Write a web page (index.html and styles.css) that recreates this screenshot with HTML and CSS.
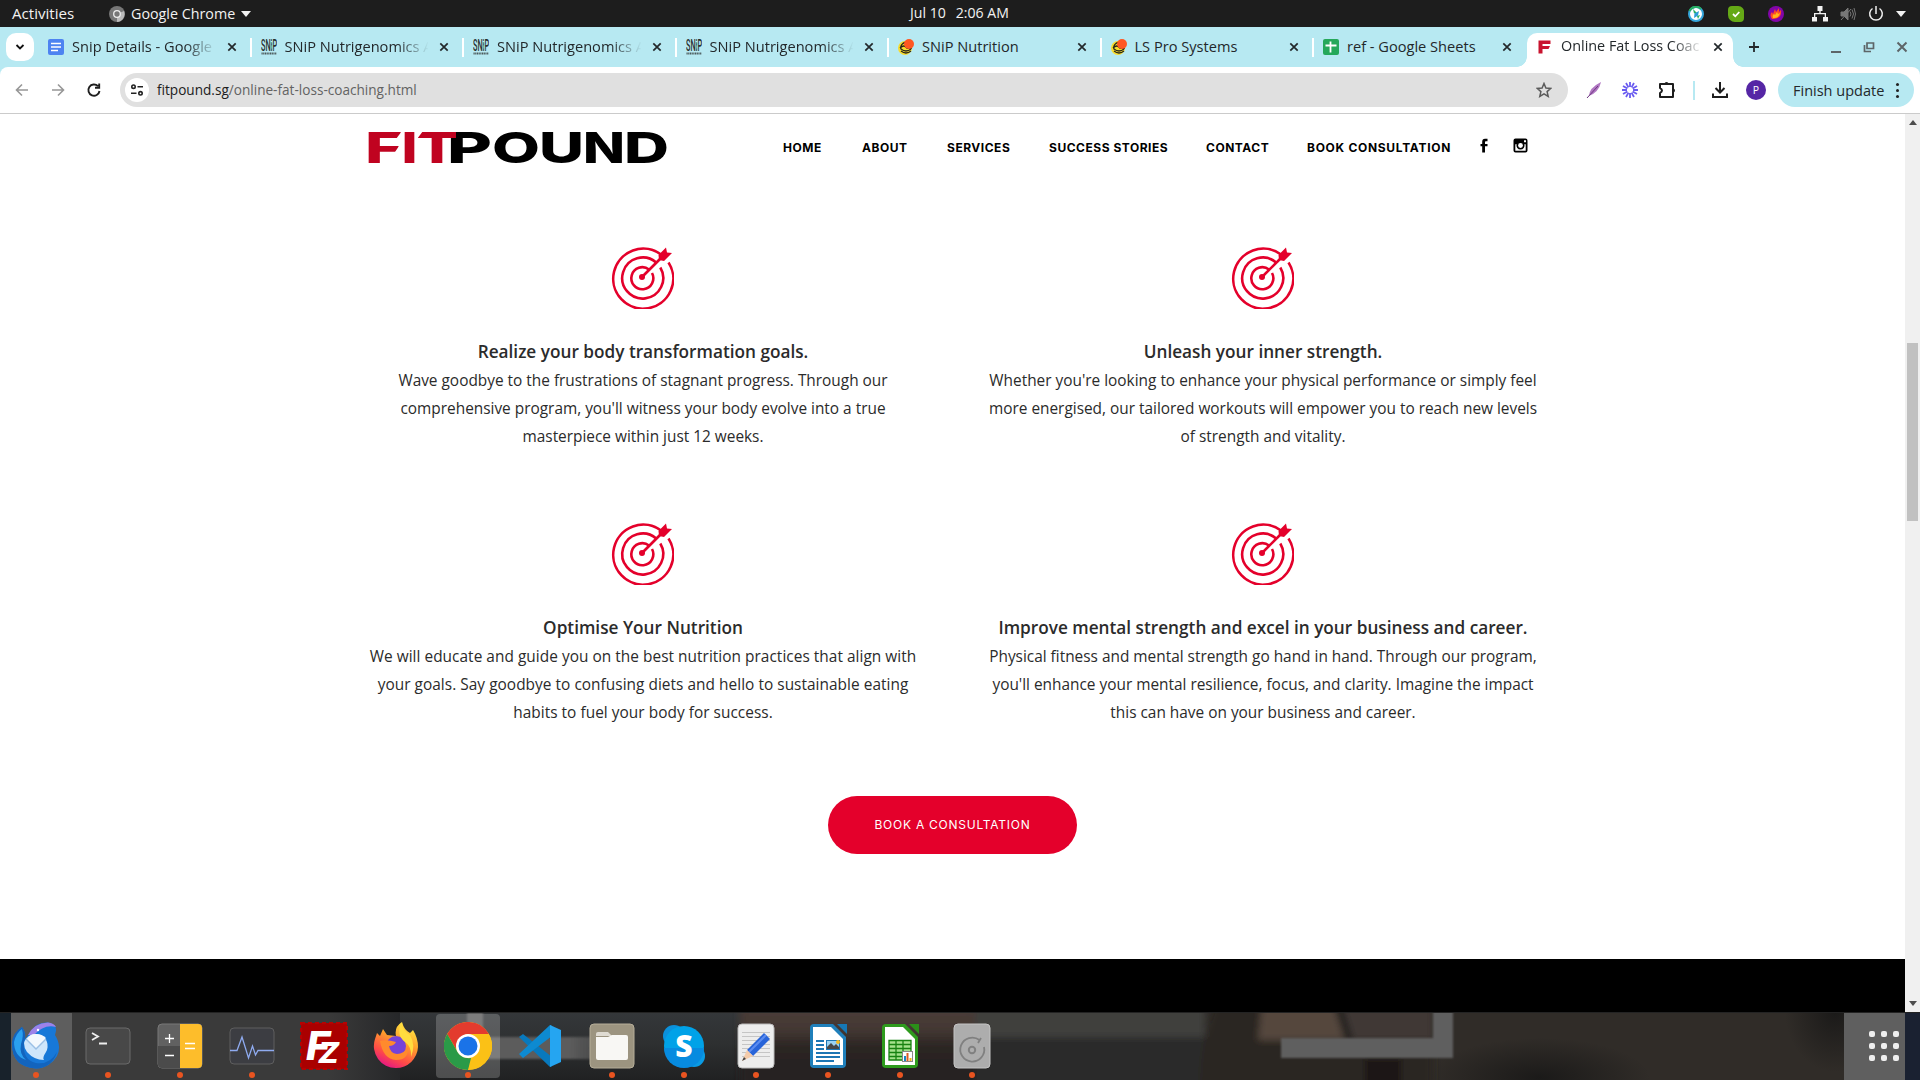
FILE: index.html
```html
<!DOCTYPE html>
<html lang="en">
<head>
<meta charset="utf-8">
<title>Online Fat Loss Coaching</title>
<link rel="stylesheet" href="styles.css">
</head>
<body>
<svg class="defs" width="0" height="0">
  <defs>
    <symbol id="target" viewBox="0 0 64 64">
      <g fill="none" stroke="#e4002b" stroke-width="2.6">
        <path d="M51 9.500A30 30 0 1 0 58.500 17.500"/>
        <path d="M46.200 17.600A20.500 20.500 0 1 0 50.300 22.500"/>
        <path d="M39 24.500A11 11 0 1 0 42 28"/>
        <path d="M32 32L53 11"/>
      </g>
      <circle cx="32" cy="32" r="3" fill="#e4002b"/>
      <path d="M49 15L48.500 10L56 2.500L57 7.500L62 8L54 16Z" fill="#e4002b"/>
    </symbol>
    <symbol id="close" viewBox="0 0 10 10"><path d="M1.300 1.300L8.700 8.700M8.700 1.300L1.300 8.700" stroke="#23282b" stroke-width="1.700"/></symbol>
    <symbol id="snip" viewBox="0 0 16 16">
      <text x="0" y="11.500" font-family="Roboto,sans-serif" font-size="16" font-weight="500" fill="#27302f" textLength="16" lengthAdjust="spacingAndGlyphs">SNiP</text>
      <path d="M9.600 3L12 5L10 8L12 11" stroke="#6ccbb2" fill="none" stroke-width=".8"/>
      <path d="M.5 14.500H15.500" stroke="#4b595b" stroke-width="2" stroke-dasharray="1.200 .5"/>
    </symbol>
    <symbol id="nutri" viewBox="0 0 16 16">
      <circle cx="7" cy="9" r="7" fill="#f7dc2d"/>
      <path d="M8 3C4 4 2 7 3 10Q8 14 13 10M2 9Q6 5 9 9H14M3 12Q8 16 13 12" fill="none" stroke="#26251c" stroke-width="1.300"/>
      <circle cx="11" cy="5" r="5" fill="#ff5722"/>
    </symbol>
  </defs>
</svg>

<header class="topbar">
  <span class="activities">Activities</span>
  <span class="app">
    <svg width="16" height="16" viewBox="0 0 16 16"><circle cx="8" cy="8" r="8" fill="#777"/><path d="M8 8L15 5A8 8 0 0 1 8 16Z" fill="#bbb"/><circle cx="8" cy="8" r="3.300" fill="#777" stroke="#eee" stroke-width="1.300"/></svg>
    <span class="app-name">Google Chrome</span>
    <svg width="10" height="6" viewBox="0 0 10 6"><path d="M0 0H10L5 6Z" fill="#f2f2f2"/></svg>
  </span>
  <span class="clock"><span>Jul 10</span><span>2:06 AM</span></span>
  <span class="tray">
    <svg width="16" height="16" viewBox="0 0 16 16"><circle cx="8" cy="8" r="7" fill="#fff" stroke="#35a6dc" stroke-width="2"/><path d="M1.500 5A7 7 0 0 1 13 3" fill="none" stroke="#27ae60" stroke-width="2"/><path d="M5 3L9 7L6 7.500Z" fill="#27ae60"/><path d="M6.500 7.500L11 5L10 9.500L6 12Z" fill="#2b9bd8"/><path d="M9 10L12 9L10 13Z" fill="#27ae60"/></svg>
    <svg width="16" height="16" viewBox="0 0 16 16"><path d="M4 0H10A6 6 0 0 1 16 7V12Q16 16 12 16H7A7 7 0 0 1 0 9V4Q0 0 4 0" fill="#65a916"/><path d="M5 8L7.300 10.300L11.300 6" fill="none" stroke="#fff" stroke-width="1.800"/></svg>
    <svg width="16" height="16" viewBox="0 0 16 16"><circle cx="8" cy="8" r="8" fill="#8205a8"/><path d="M4 13Q1 9 4 6L5 8L7 3L8 6L11 2V6L13 4Q14 12 6 13Z" fill="#ff4b26"/><path d="M5 12Q4 9 6 8L7 9L9 6L10 8L12 7Q11 12 6 12Z" fill="#ffb719"/></svg>
    <svg class="net" width="16" height="16" viewBox="0 0 16 16" fill="#f2f2f2"><path d="M5.500 0H10.500V5H8.700V7H14V11H16V15.500H11V11H12.700V8.300H3.300V11H5V15.500H0V11H2V7H7.300V5H5.500Z"/></svg>
    <svg width="16" height="16" viewBox="0 0 16 16" fill="none" stroke="#777"><path d="M1 6H4L8 2V14L4 10H1Z" fill="#777"/><path d="M10 5.500Q12 8 10 10.500M12 3.500Q15 8 12 12.500M14 2Q17 8 14 14M1 14L11 3"/></svg>
    <svg width="16" height="16" viewBox="0 0 16 16" fill="none" stroke="#eee" stroke-width="1.500"><path d="M8 0V8M4.500 2.500A6.300 6.300 0 1 0 11.500 2.500"/></svg>
    <svg width="10" height="6" viewBox="0 0 10 6"><path d="M0 0H10L5 6Z" fill="#f2f2f2"/></svg>
  </span>
</header>

<div class="tabstrip">
  <button class="tab-search"><svg width="10" height="8" viewBox="0 0 10 8"><path d="M1.500 2L5 5.500L8.500 2" fill="none" stroke="#111" stroke-width="1.800"/></svg></button>
  <div class="tab"><svg class="fav" viewBox="0 0 16 16"><rect width="16" height="16" rx="2" fill="#4d83f1"/><path d="M3 4.500H13M3 8H13M3 11.500H10" stroke="#fff" stroke-width="1.700"/></svg><span class="tab-title fade">Snip Details - Google</span><svg class="x"><use href="#close"/></svg></div>
  <div class="tab"><svg class="fav"><use href="#snip"/></svg><span class="tab-title fade">SNiP Nutrigenomics A</span><svg class="x"><use href="#close"/></svg></div>
  <div class="tab"><svg class="fav"><use href="#snip"/></svg><span class="tab-title fade">SNiP Nutrigenomics A</span><svg class="x"><use href="#close"/></svg></div>
  <div class="tab"><svg class="fav"><use href="#snip"/></svg><span class="tab-title fade">SNiP Nutrigenomics A</span><svg class="x"><use href="#close"/></svg></div>
  <div class="tab"><svg class="fav"><use href="#nutri"/></svg><span class="tab-title">SNiP Nutrition</span><svg class="x"><use href="#close"/></svg></div>
  <div class="tab"><svg class="fav"><use href="#nutri"/></svg><span class="tab-title">LS Pro Systems</span><svg class="x"><use href="#close"/></svg></div>
  <div class="tab last"><svg class="fav" viewBox="0 0 16 16"><rect width="16" height="16" rx="2" fill="#25a85a"/><path d="M2.500 6.500H13.500M7.500 2.500V13.500" stroke="#fff" stroke-width="1.800"/></svg><span class="tab-title">ref - Google Sheets</span><svg class="x"><use href="#close"/></svg></div>
  <div class="tab active"><svg class="fav" viewBox="0 0 16 16"><path d="M1.500 1.500H13.500V5H5.500V7H13L11.500 10H5.500V14.500H1.500Z" fill="#c9142f"/></svg><span class="tab-title fade">Online Fat Loss Coac</span><svg class="x"><use href="#close"/></svg></div>
  <svg class="plus" width="12" height="12" viewBox="0 0 12 12"><path d="M6 1V11M1 6H11" stroke="#23282b" stroke-width="1.800"/></svg>
  <div class="winctl">
    <svg width="12" height="12" viewBox="0 0 12 12"><path d="M1 11H11" stroke="#5d6568" stroke-width="2"/></svg>
    <svg width="12" height="12" viewBox="0 0 12 12" fill="none" stroke="#5d6568" stroke-width="1.700"><path d="M4 2H10.500V7.500H4ZM1.500 4V10.500H8"/></svg>
    <svg width="12" height="12" viewBox="0 0 12 12"><path d="M1.500 1.500L10.500 10.500M10.500 1.500L1.500 10.500" stroke="#5d6568" stroke-width="2"/></svg>
  </div>
</div>

<div class="toolbar-wrap">
<div class="toolbar">
  <div class="navbtns">
    <svg width="16" height="16" viewBox="0 0 16 16" fill="none" stroke="#979797" stroke-width="1.600"><path d="M14 8H2.500M8 2.500L2.500 8L8 13.500"/></svg>
    <svg width="16" height="16" viewBox="0 0 16 16" fill="none" stroke="#979797" stroke-width="1.600"><path d="M2 8H13.500M8 2.500L13.500 8L8 13.500"/></svg>
    <svg width="16" height="16" viewBox="0 0 16 16" fill="none" stroke="#1e1e1e" stroke-width="1.900"><path d="M13.500 9A5.600 5.600 0 1 1 12 4.200M13.200 1.500V5.700H9"/></svg>
  </div>
  <div class="omnibox">
    <span class="chip"><svg width="14" height="14" viewBox="0 0 14 14" fill="none" stroke="#222" stroke-width="1.600"><circle cx="3.500" cy="3.700" r="1.700"/><path d="M7.500 3.700H13M1 10.300H6.500"/><circle cx="10.500" cy="10.300" r="1.700"/></svg></span>
    <span class="url">fitpound.sg<span>/online-fat-loss-coaching.html</span></span>
    <svg width="16" height="16" viewBox="0 0 16 16"><path d="M8 1.500L9.900 6L14.800 6.400L11.100 9.600L12.200 14.400L8 11.800L3.800 14.400L4.900 9.600L1.200 6.400L6.100 6Z" fill="none" stroke="#5b5b5b" stroke-width="1.500"/></svg>
  </div>
  <div class="ext">
    <svg width="16" height="18" viewBox="0 0 16 18"><path d="M3 15Q3 7 15 1Q13 11 3 15Z" fill="#b076c2"/><path d="M1 17L12 5" stroke="#6c357e"/></svg>
    <svg width="18" height="18" viewBox="-9 -9 18 18" stroke="#6a5cf0" stroke-width="1.800"><path d="M0-3V-8M0 3V8M-3 0H-8M3 0H8M1.500-2.600L4-7M-1.500-2.600L-4-7M1.500 2.600L4 7M-1.500 2.600L-4 7M2.600-1.500L7-4M2.600 1.500L7 4M-2.600-1.500L-7-4M-2.600 1.500L-7 4"/></svg>
    <svg width="18" height="18" viewBox="0 0 18 18"><path d="M2 3H15V16H2V12Q6 9.500 2 7Z" fill="none" stroke="#1e1e1e" stroke-width="2" stroke-linejoin="round"/><path d="M6.500 3A2 2 0 0 1 10.500 3ZM15 7.500A2 2 0 0 1 15 11.500Z" fill="#1e1e1e"/></svg>
    <i class="sep"></i>
    <svg width="18" height="18" viewBox="0 0 18 18" fill="none" stroke="#1e1e1e" stroke-width="2"><path d="M9 1V11M4.500 7L9 11.500L13.500 7M2 12.500V16H16V12.500"/></svg>
    <span class="avatar">P</span>
  </div>
  <button class="update"><span>Finish update</span><i></i></button>
</div>
</div>

<div class="viewport">
  <main class="page">
    <div class="site-head">
      <svg class="logo" width="300" height="34" viewBox="0 0 300 34" font-family="Inter,sans-serif" font-weight="800" font-size="42.500">
        <g fill="#000">
          <text x="79" y="32.500" textLength="45" lengthAdjust="spacingAndGlyphs">P</text>
          <text x="124" y="32.500" textLength="48" lengthAdjust="spacingAndGlyphs">O</text>
          <text x="171" y="32.500" textLength="45" lengthAdjust="spacingAndGlyphs">U</text>
          <text x="215" y="32.500" textLength="42" lengthAdjust="spacingAndGlyphs">N</text>
          <text x="256" y="32.500" textLength="45" lengthAdjust="spacingAndGlyphs">D</text>
        </g>
        <g fill="#c00320">
          <text x="-3" y="32.500" textLength="38" lengthAdjust="spacingAndGlyphs">F</text>
          <text x="33.500" y="32.500" textLength="16" lengthAdjust="spacingAndGlyphs">I</text>
          <text x="48" y="32.500" textLength="42" lengthAdjust="spacingAndGlyphs">T</text>
        </g>
        <path d="M34 1L28 9H34ZM33 13L27 22H33ZM49 9L55 1H49Z" fill="#fff"/>
      </svg>
      <nav class="menu">
        <a>HOME</a><a>ABOUT</a><a>SERVICES</a><a>SUCCESS STORIES</a><a>CONTACT</a><a class="wide">BOOK CONSULTATION</a>
        <svg width="10" height="15" viewBox="0 0 10 15"><path d="M8.500 3.200H6.800Q6 3.200 6 4.200V6H8.500V8.300H6V14.500H3.200V8.300H1.500V6H3.200V3.800Q3.200 1 6 .8H8.500Z"/></svg>
        <svg width="15" height="15" viewBox="0 0 15 15"><path fill-rule="evenodd" d="M2.500.5H12.500Q14.500.5 14.500 2.500V12.500Q14.500 14.500 12.500 14.500H2.500Q.5 14.500 .5 12.500V2.500Q.5.500 2.500.5ZM2.300 6.300V12.700H12.700V6.300H11.300A4 4 0 1 1 3.700 6.300ZM11 2.200V4.300H13V2.200Z"/><circle cx="7.500" cy="7.500" r="2.400" fill="#fff"/></svg>
      </nav>
    </div>

    <section class="features">
      <article><svg class="target"><use href="#target"/></svg><h3>Realize your body transformation goals.</h3><p>Wave goodbye to the frustrations of stagnant progress. Through our<br>comprehensive program, you'll witness your body evolve into a true<br>masterpiece within just 12 weeks.</p></article>
      <article><svg class="target"><use href="#target"/></svg><h3>Unleash your inner strength.</h3><p>Whether you're looking to enhance your physical performance or simply feel<br>more energised, our tailored workouts will empower you to reach new levels<br>of strength and vitality.</p></article>
      <article><svg class="target"><use href="#target"/></svg><h3>Optimise Your Nutrition</h3><p class="loose">We will educate and guide you on the best nutrition practices that align with<br>your goals. Say goodbye to confusing diets and hello to sustainable eating<br>habits to fuel your body for success.</p></article>
      <article><svg class="target"><use href="#target"/></svg><h3>Improve mental strength and excel in your business and career.</h3><p>Physical fitness and mental strength go hand in hand. Through our program,<br>you'll enhance your mental resilience, focus, and clarity. Imagine the impact<br>this can have on your business and career.</p></article>
    </section>
    <div class="cta-row"><a class="cta">BOOK A CONSULTATION</a></div>
    <div class="band"></div>
  </main>
  <div class="scrollbar">
    <svg width="8" height="5" viewBox="0 0 8 5"><path d="M0 5H8L4 0Z" fill="#4d4d4d"/></svg>
    <div class="track"><div class="thumb"></div></div>
    <svg width="8" height="5" viewBox="0 0 8 5"><path d="M0 0H8L4 5Z" fill="#4d4d4d"/></svg>
  </div>
</div>

<footer class="dock">
  <svg class="dock-bg" width="1920" height="68" viewBox="0 0 1920 68">
    <defs>
      <filter id="s" x="-5%" y="-20%" width="110%" height="140%"><feGaussianBlur stdDeviation="3.500"/></filter>
      <filter id="t" x="-5%" y="-20%" width="110%" height="140%"><feGaussianBlur stdDeviation="1.200"/></filter>
      <linearGradient id="g1"><stop offset="0" stop-color="#3a3a3a"/><stop offset=".78" stop-color="#3a3a3a"/><stop offset="1" stop-color="#262729"/></linearGradient>
      <linearGradient id="g2"><stop offset="0" stop-color="#5c5c5c"/><stop offset=".6" stop-color="#5c5c5c"/><stop offset="1" stop-color="#5c5c5c" stop-opacity="0"/></linearGradient>
      <linearGradient id="g3" x2="0" y2="1"><stop offset="0" stop-color="#34373a"/><stop offset=".45" stop-color="#2e3031"/><stop offset="1" stop-color="#202122"/></linearGradient>
      <linearGradient id="g4" x2="0" y2="1"><stop offset="0" stop-color="#4b3e3a"/><stop offset=".3" stop-color="#443833"/><stop offset=".5" stop-color="#2a2523"/><stop offset="1" stop-color="#24201f"/></linearGradient>
      <radialGradient id="g5"><stop offset="0" stop-color="#1b1a19"/><stop offset="1" stop-color="#1b1a19" stop-opacity="0"/></radialGradient>
    </defs>
    <rect width="1920" height="68" fill="#302c28"/>
    <rect x="72" width="328" height="68" fill="url(#g1)"/>
    <rect x="400" width="345" height="68" fill="url(#g3)"/>
    <ellipse cx="1540" cy="66" rx="110" ry="40" fill="url(#g5)"/>
    <ellipse cx="1835" cy="0" rx="50" ry="60" fill="url(#g5)"/>
    <g filter="url(#s)">
      <rect x="740" y="-10" width="240" height="90" fill="url(#g4)"/>
      <rect x="975" y="-10" width="230" height="46" fill="#40413c"/>
      <rect x="975" y="25" width="230" height="55" fill="#2c2c2a"/>
      <path d="M1215-10H1433V80H1200Q1200 26 1215-10Z" fill="#2b2623"/>
      <path d="M1262-10H1336L1350 28H1258Z" fill="#55473e"/>
      <path d="M1340-10H1433V28H1350Z" fill="#403936"/>
      <path d="M1333-10H1341L1353 28H1345Z" fill="#1f1f1e"/>
      <rect x="1365" y="47" width="36" height="36" fill="#1a1919"/>
    </g>
    <g filter="url(#t)">
      <rect x="467" y="-4" width="16" height="32" fill="#5c5c5c"/>
      <rect x="467" y="25" width="170" height="22" fill="url(#g2)"/>
      <path d="M1281 26H1433V-4H1453V46H1281Z" fill="#5f5f5f"/>
    </g>
    <rect width="11" height="68" fill="#18222b"/><rect x="11" width="61" height="68" fill="#5e5e5e"/>
    <rect x="1844" width="61" height="68" fill="#5f5f5f"/><rect x="1905" width="15" height="68" fill="#1a2131"/>
    <rect width="1920" height="1" fill="#232323"/>
  </svg>
  <div class="apps">
    <div class="appicon on"><svg viewBox="0 0 48 48"><path d="M0 22Q2 10 10 5Q14 10 13 17L20 8Q25 0 36 0.500Q45 2 44 9L43 13Q50 24 45 34Q38 46 24 46.500Q0 45 0 22Z" fill="#1778d8"/><path d="M0 22Q0 11 10 5Q15 12 12 20Q10 38 24 41Q38 43 45 30Q40 46 24 46.500Q0 45 0 22Z" fill="#1364bd"/><path d="M2 20Q4 11 10 7Q12 14 9 22Q7 32 14 38Q2 34 2 20Z" fill="#2aa0f0"/><path d="M16 13Q22 1 36 .5Q42 1 44 5Q32 2 22 13Z" fill="#9c82e9"/><path d="M12 21A12 12 0 1 1 34 30Q30 36 32 38Q22 38 15 30Q12 26 12 21Z" fill="#cfe6fb"/><path d="M15 17L24 26L34 16Q30 12 24 12Q18 12 15 17Z" fill="#f3f8fd"/><path d="M14 17L24 27L34 17" fill="none" stroke="#9cbfe4" stroke-width="1.300"/><circle cx="26" cy="8" r="1.200" fill="#fff"/></svg></div>
    <div class="appicon on"><svg viewBox="0 0 48 48"><rect x="2" y="6" width="44" height="36" rx="4" fill="#484848" stroke="#6a6a6a"/><path d="M8 11L14 14.500L8 18M15 21.500H23" stroke="#eee" stroke-width="1.800" fill="none"/></svg></div>
    <div class="appicon on"><svg viewBox="0 0 48 48"><rect x="2" y="2" width="44" height="44" rx="4" fill="#616161" stroke="#787878"/><path d="M2 24H24V46H6Q2 46 2 42Z" fill="#4b4b4b"/><path d="M24 2H42Q46 2 46 6V42Q46 46 42 46H24Z" fill="#fdbd2b"/><path d="M9 16.500H18M13.500 12V21M9 33.500H18M29 21.500H39M29 26.500H39" stroke="#fff" stroke-width="1.300"/></svg></div>
    <div class="appicon on"><svg viewBox="0 0 48 48"><rect x="2" y="6" width="44" height="36" rx="4" fill="#3c3d42" stroke="#5e5e5e"/><path d="M2 28.500H9L14 15L20.500 36L24.500 24L27.500 33L30 28.500H46" fill="none" stroke="#8fabf0" stroke-width="1.300"/></svg></div>
    <div class="appicon"><svg viewBox="0 0 48 48"><rect x="1" y="1" width="46" height="46" fill="#aa0000" stroke="#b40303" stroke-width="2.500" stroke-dasharray="4 3"/><g fill="#fff" font-family="Inter,sans-serif" font-weight="800" font-style="italic"><text x="6" y="38" font-size="39" textLength="24" lengthAdjust="spacingAndGlyphs">F</text><text x="18" y="41" font-size="29" textLength="21" lengthAdjust="spacingAndGlyphs">Z</text></g></svg></div>
    <div class="appicon"><svg viewBox="0 0 48 48"><defs><linearGradient id="ff" x1=".8" y1="0" x2=".3" y2="1"><stop offset="0" stop-color="#fff146"/><stop offset=".4" stop-color="#ffa02b"/><stop offset=".75" stop-color="#ff4b47"/><stop offset="1" stop-color="#e31587"/></linearGradient></defs><path d="M24 46A22 22 0 0 1 3 17L5 11L8 14L11 7L15 13L24 14Q22 5 30 0Q32 8 38 11L41 8Q46 16 46 25A22 22 0 0 1 24 46Z" fill="url(#ff)"/><circle cx="24" cy="24" r="10" fill="#7543d8"/><path d="M8 19Q15 17 24 20Q22 24 17 24Q18 31 25 32Q32 32 36 25Q37 38 24 38Q11 37 8 19Z" fill="#ff8a2d"/><path d="M29 1Q31 9 38 13Q44 23 39 35Q40 25 33 20Q24 13 29 1Z" fill="#ffdc3f"/></svg></div>
    <div class="appicon on current"><svg viewBox="0 0 48 48"><circle cx="24" cy="24" r="24" fill="#fbc116"/><path d="M3.200 12A24 24 0 0 1 44.800 12H24Q16 12 12 27Z" fill="#e33b2e"/><path d="M3.200 12L13.600 30Q18 37 27 36L24 48A24 24 0 0 1 3.200 12Z" fill="#2a9a48"/><path d="M24 12H44.800A24 24 0 0 1 24 48L34.400 30Z" fill="#fbc116"/><circle cx="24" cy="24" r="12" fill="#fff"/><circle cx="24" cy="24" r="9.500" fill="#1a73e8"/></svg></div>
    <div class="appicon"><svg viewBox="0 0 48 48"><path d="M3 15L7 12L36 35V44L34 45Z" fill="#0879bd"/><path d="M3 32L7 36L36 14V4L34 3Z" fill="#0d8ad1"/><path d="M34 3L45 8V40L34 45Z" fill="#25a5f1"/></svg></div>
    <div class="appicon on"><svg viewBox="0 0 48 48"><rect x="2" y="2" width="44" height="44" rx="4" fill="#9c9480" stroke="#b5ad98"/><path d="M8 14V12Q8 10 10 10H20L24 14Z" fill="#dfdbd2"/><path d="M8 15H20L24 13H38Q40 13 40 15V36Q40 38 38 38H10Q8 38 8 36Z" fill="#f8f7f4"/></svg></div>
    <div class="appicon on"><svg viewBox="0 0 48 48"><circle cx="14" cy="14" r="11" fill="#0b91dc"/><circle cx="34" cy="34" r="11" fill="#0a9be4"/><circle cx="24" cy="24" r="20" fill="#00a2e8"/><path d="M4 26A20 20 0 0 0 44 26Z" fill="#078be0"/><text x="24" y="35" text-anchor="middle" font-family="Open Sans,sans-serif" font-weight="800" font-size="30" fill="#fff">S</text></svg></div>
    <div class="appicon on"><svg viewBox="0 0 48 48"><rect x="6" y="2" width="36" height="44" rx="4" fill="#ededed" stroke="#bbb"/><path d="M10 10.500H38M10 14.500H38M10 18.500H38M10 22.500H38M10 26.500H38M10 30.500H38M10 34.500H38" stroke="#c5c5c5"/><path d="M32 11L38 17L21 34L15 28Z" fill="#2864d9"/><path d="M34 13L17 30" stroke="#5c8cf0" stroke-width="2"/><path d="M15 28L21 34L10 39Z" fill="#f4cbaa"/><path d="M12 35L14 37L10 39Z" fill="#444"/></svg></div>
    <div class="appicon on"><svg viewBox="0 0 48 48"><path d="M10 2H29L42 15V42Q42 46 38 46H10Q6 46 6 42V6Q6 2 10 2Z" fill="#1f7fba"/><path d="M9 5H27L39 17V43H9Z" fill="#fff"/><path d="M33 2H43V12Z" fill="#1678b5"/><path d="M12 19H20M12 23H20M12 27H20M12 31H36M12 35H36M12 39H30" stroke="#1d76b4" stroke-width="2"/><rect x="22.500" y="18.500" width="13" height="9" fill="#9ad2f2" stroke="#1d76b4"/><path d="M23 27V25L27 21L30 24L32 22L35 25V27Z" fill="#474747"/><circle cx="34" cy="20" r="2" fill="#f6bb1f"/></svg></div>
    <div class="appicon on"><svg viewBox="0 0 48 48"><path d="M10 2H29L42 15V42Q42 46 38 46H10Q6 46 6 42V6Q6 2 10 2Z" fill="#2e9b1d"/><path d="M9 5H27L39 17V43H9Z" fill="#fff"/><path d="M33 2H43V12Z" fill="#2b9019"/><path d="M13 18.500H35V38H13ZM13 22.500H35M13 26.500H35M13 30.500H35M13 34.500H35M20 18V38M27 18V38" fill="#a5e18d" stroke="#168211" stroke-width="1.300"/><rect x="26.500" y="29.500" width="10" height="10" fill="#fff" stroke="#888"/><path d="M29 34V39" stroke="#1686c8" stroke-width="2"/><path d="M31.500 31V39" stroke="#dd5b22" stroke-width="2"/><path d="M34.500 36V39" stroke="#f0b914" stroke-width="2"/></svg></div>
    <div class="appicon on"><svg viewBox="0 0 48 48"><rect x="6" y="2" width="36" height="44" rx="4" fill="#adadad" stroke="#c4c4c4"/><path d="M31.500 18A12 12 0 1 0 36 25M30 21L33 16" fill="none" stroke="#808080" stroke-width="1.800"/><circle cx="24" cy="28" r="3.200" fill="none" stroke="#808080" stroke-width="2"/></svg></div>
  </div>
  <svg class="grid" width="32" height="32" viewBox="0 0 32 32" fill="#eee"><rect x="1" y="1" width="6" height="6" rx="2"/><rect x="13" y="1" width="6" height="6" rx="2"/><rect x="25" y="1" width="6" height="6" rx="2"/><rect x="1" y="13" width="6" height="6" rx="2"/><rect x="13" y="13" width="6" height="6" rx="2"/><rect x="25" y="13" width="6" height="6" rx="2"/><rect x="1" y="25" width="6" height="6" rx="2"/><rect x="13" y="25" width="6" height="6" rx="2"/><rect x="25" y="25" width="6" height="6" rx="2"/></svg>
</footer>
</body>
</html>
```
FILE: styles.css
```css
* { box-sizing: border-box; }
body { margin: 0; width: 1920px; height: 1080px; overflow: hidden; display: flex; flex-direction: column; font-family: "Open Sans", sans-serif; background: #fff; }
svg { display: block; flex: none; }
.defs { position: absolute; }
button { border: 0; padding: 0; font: inherit; }

.topbar { height: 27px; background: #1d1d1d; color: #f2f2f2; font-size: 15px; line-height: 26px; display: grid; grid-template-columns: 97px 801px 1fr auto; padding: 0 14px 0 12px; flex: none; }
.activities { font-size: 15.1px; }
.app { display: flex; align-items: center; gap: 6px; }
.app-name { font-size: 14.3px; }
.clock { display: flex; gap: 10px; font-size: 14.1px; white-space: nowrap; }
.tray { display: flex; align-items: center; gap: 24px; }
.tray .net { margin-left: 4px; }
.tray .net ~ svg { margin-left: -12px; }

.tabstrip { height: 40px; background: #b7e9f2; display: flex; align-items: center; flex: none; padding-left: 6px; }
.tab-search { width: 28px; height: 28px; border-radius: 10px; background: #fff; display: grid; place-items: center; margin-right: 4px; }
.tab { width: 212.5px; height: 28px; padding: 0 14px 0 10px; display: flex; align-items: center; position: relative; flex: none; }
.tab::after { content: ""; position: absolute; right: -1px; top: 5px; width: 2px; height: 19px; background: #fff; }
.tab.last::after { display: none; }
.fav { width: 16px; height: 16px; margin-right: 8px; }
.tab-title { flex: 1; font-size: 14.6px; line-height: 22px; margin-top: -2px; color: #23282b; white-space: nowrap; overflow: hidden; margin-right: 6px; }
.fade { -webkit-mask-image: linear-gradient(90deg, #000 76%, transparent 97%); mask-image: linear-gradient(90deg, #000 76%, transparent 97%); }
.x { width: 10px; height: 10px; }
.tab.active { width: 206px; height: 34px; margin: 6px 0 0 1.5px; padding: 0 10px 6px 10px; background: #fff; border-radius: 10px 10px 0 0; }
.tab.active .tab-title { font-size: 14.4px; }
.tab.active::before, .tab.active::after { content: ""; display: block; position: absolute; top: auto; bottom: 0; width: 10px; height: 10px; }
.tab.active::before { left: -10px; background: radial-gradient(circle at 0 0, transparent 9.5px, #fff 10px); }
.tab.active::after { right: -10px; background: radial-gradient(circle at 100% 0, transparent 9.5px, #fff 10px); }
.plus { margin-left: 15px; }
.winctl { display: flex; gap: 21px; margin-left: auto; padding-right: 12px; }

.toolbar-wrap { background: #b7e9f2; flex: none; }
.toolbar { height: 47px; border-bottom: 1px solid #cbcbcb; background: #fff; border-radius: 8px 8px 0 0; display: flex; align-items: center; }
.navbtns { display: flex; gap: 20px; width: 120px; padding-left: 14px; }
.omnibox { width: 1448px; height: 34px; border-radius: 17px; background: #e0e0e0; display: flex; align-items: center; padding: 0 16px 0 5px; }
.chip { width: 24px; height: 24px; border-radius: 50%; background: #fff; display: grid; place-items: center; }
.url { flex: 1; margin-left: 8px; font-size: 13.6px; line-height: 22px; color: #202020; }
.url span { color: #636363; }
.ext { display: flex; align-items: center; gap: 18px; margin-left: 18px; }
.ext svg:nth-child(n+2) { margin-left: 1px; }
.ext svg:nth-child(5) { margin-left: -1px; }
.sep { width: 2px; height: 19px; background: #b7e9f2; margin: 0 -1px; }
.avatar { width: 20px; height: 20px; border-radius: 50%; background: #5526a5; color: #fff; font-size: 10.5px; line-height: 20px; text-align: center; margin-left: -1px; }
.update { width: 136px; height: 34px; margin-left: 12px; border-radius: 17px; background: #b7e9f2; color: #23282b; font-size: 14.5px; display: flex; align-items: center; padding-left: 15px; gap: 12px; white-space: nowrap; }
.update i { width: 3px; height: 3px; border-radius: 50%; background: #222; box-shadow: 0 -6px #222, 0 6px #222; }

.viewport { flex: 1; min-height: 0; display: flex; }
.page { width: 1905px; display: flex; flex-direction: column; }
.site-head { height: 66px; display: flex; padding-left: 368px; }
.logo { margin-top: 16px; width: 300px; overflow: visible; }
.menu { display: grid; grid-template-columns: 79px 85px 102px 157px 101px 172px 34px 20px; margin-left: 115px; height: 66px; padding-top: 1px; align-items: center; font: 700 12px/18px Inter, sans-serif; letter-spacing: .52px; white-space: nowrap; }
.menu .wide { letter-spacing: .7px; }
.menu svg { margin-top: -5px; }
.features { display: grid; grid-template-columns: 620px 620px; grid-auto-rows: 276px; margin-left: 333px; padding-top: 65px; height: 616px; }
.features article { text-align: center; color: #2b2b2b; white-space: nowrap; }
.target { width: 64px; height: 64px; margin: 0 auto; position: relative; left: -1px; }
.features h3 { margin: 29px 0 0; font-size: 17.22px; line-height: 28px; font-weight: 600; }
.features p { margin: 0; font-size: 15.4px; line-height: 28px; padding-top: 1px; }
.features .loose { letter-spacing: .04px; }
.cta-row { display: flex; justify-content: center; height: 163px; }
.cta { width: 249px; height: 58px; border-radius: 29px; background: #e4002b; color: #fff; font: 400 12px/58px Inter, sans-serif; letter-spacing: .75px; text-align: center; }
.band { flex: 1; background: #000; }
.scrollbar { width: 15px; background: #f0f0f0; display: flex; flex-direction: column; align-items: center; padding: 6px 0; }
.track { flex: 1; padding-top: 218px; }
.thumb { width: 11px; height: 178px; background: #c1c1c1; }

.dock { height: 68px; flex: none; display: flex; justify-content: space-between; position: relative; }
.dock-bg { position: absolute; inset: 0; }
.apps { display: flex; position: relative; }
.appicon { width: 72px; height: 68px; padding: 10px 12px; position: relative; }
.appicon > svg { width: 48px; height: 48px; position: relative; }
.on::after { content: ""; position: absolute; left: 33px; top: 60px; width: 6px; height: 6px; border-radius: 50%; background: #e95420; }
.current::before { content: ""; position: absolute; left: 4px; top: 2px; width: 64px; height: 64px; border-radius: 4px; background: rgba(255, 255, 255, .2); }
.grid { position: relative; margin: 18px 20px 0 0; }
```
